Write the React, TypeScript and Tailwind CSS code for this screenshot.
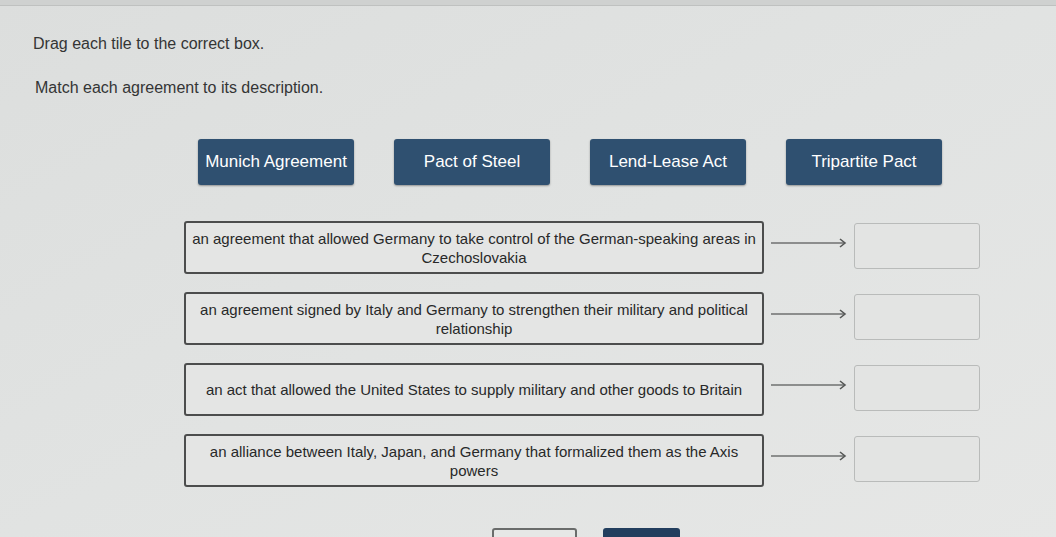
import React from 'react'

const tiles = ['Munich Agreement', 'Pact of Steel', 'Lend-Lease Act', 'Tripartite Pact']

// each description is split where the text wraps inside its box
const descriptions = [
  ['an agreement that allowed Germany to take control of the German-speaking areas in', 'Czechoslovakia'],
  ['an agreement signed by Italy and Germany to strengthen their military and political', 'relationship'],
  ['an act that allowed the United States to supply military and other goods to Britain'],
  ['an alliance between Italy, Japan, and Germany that formalized them as the Axis', 'powers'],
]

function Arrow() {
  return (
    <svg width="78" height="12" viewBox="0 0 78 12" className="shrink-0" aria-hidden="true">
      <line x1="1" y1="6" x2="74" y2="6" stroke="#6f7170" strokeWidth="1.5" />
      <path d="M70 2 L75 6 L70 10" fill="none" stroke="#555756" strokeWidth="1.6" />
    </svg>
  )
}

export default function App() {
  return (
    <div
      className="relative w-[1056px] h-[537px] overflow-hidden bg-gradient-to-br from-[#dcdedd] via-[#e1e3e2] to-[#e6e7e6] font-['Liberation_Sans',Arial,sans-serif]"
    >
      {/* top edge of the panel */}
      <div className="h-[6px] bg-[#cfd1d0] border-b border-[#bfc1c0]" />

      <div className="pl-[33px] pt-[28px]">
        <p className="text-[16px] leading-[19px] text-[#343535]">Drag each tile to the correct box.</p>
        <p className="mt-[25px] pl-[2px] text-[16px] leading-[19px] text-[#343535]">
          Match each agreement to its description.
        </p>
      </div>

      {/* draggable tiles */}
      <div className="mt-[42px] pl-[198px] flex gap-[40px]">
        {tiles.map((t) => (
          <div
            key={t}
            className="w-[156px] h-[46px] rounded-[3px] bg-[#2f5070] shadow-[0_1px_2px_rgba(0,0,0,0.35)] flex items-center justify-center text-[17px] text-white"
          >
            {t}
          </div>
        ))}
      </div>

      {/* description rows with drop targets */}
      <div className="mt-[36px] pl-[184px] flex flex-col gap-[18px]">
        {descriptions.map((lines) => (
          <div key={lines[0]} className="flex items-start">
            <div className="w-[580px] h-[53px] rounded-[3px] border-2 border-[#4c4d4d] bg-[#e4e5e4] flex flex-col items-center justify-center text-center text-[15px] leading-[19px] text-[#282929] whitespace-nowrap">
              {lines.map((l) => (
                <span key={l}>{l}</span>
              ))}
            </div>
            <div className="ml-[6px] mt-[16px]">
              <Arrow />
            </div>
            <div className="ml-[6px] mt-[2px] w-[126px] h-[46px] rounded-[3px] border border-[#b9bbba] bg-[#e3e4e3]" />
          </div>
        ))}
      </div>

      {/* action buttons, cut off at the bottom edge */}
      <div className="absolute left-[492px] top-[528px] flex gap-[26px]">
        <div className="w-[85px] h-[30px] rounded-[3px] border-2 border-[#6a6c6b] bg-[#e6e7e6]" />
        <div className="w-[77px] h-[30px] rounded-[3px] bg-[#223e5e]" />
      </div>
    </div>
  )
}
